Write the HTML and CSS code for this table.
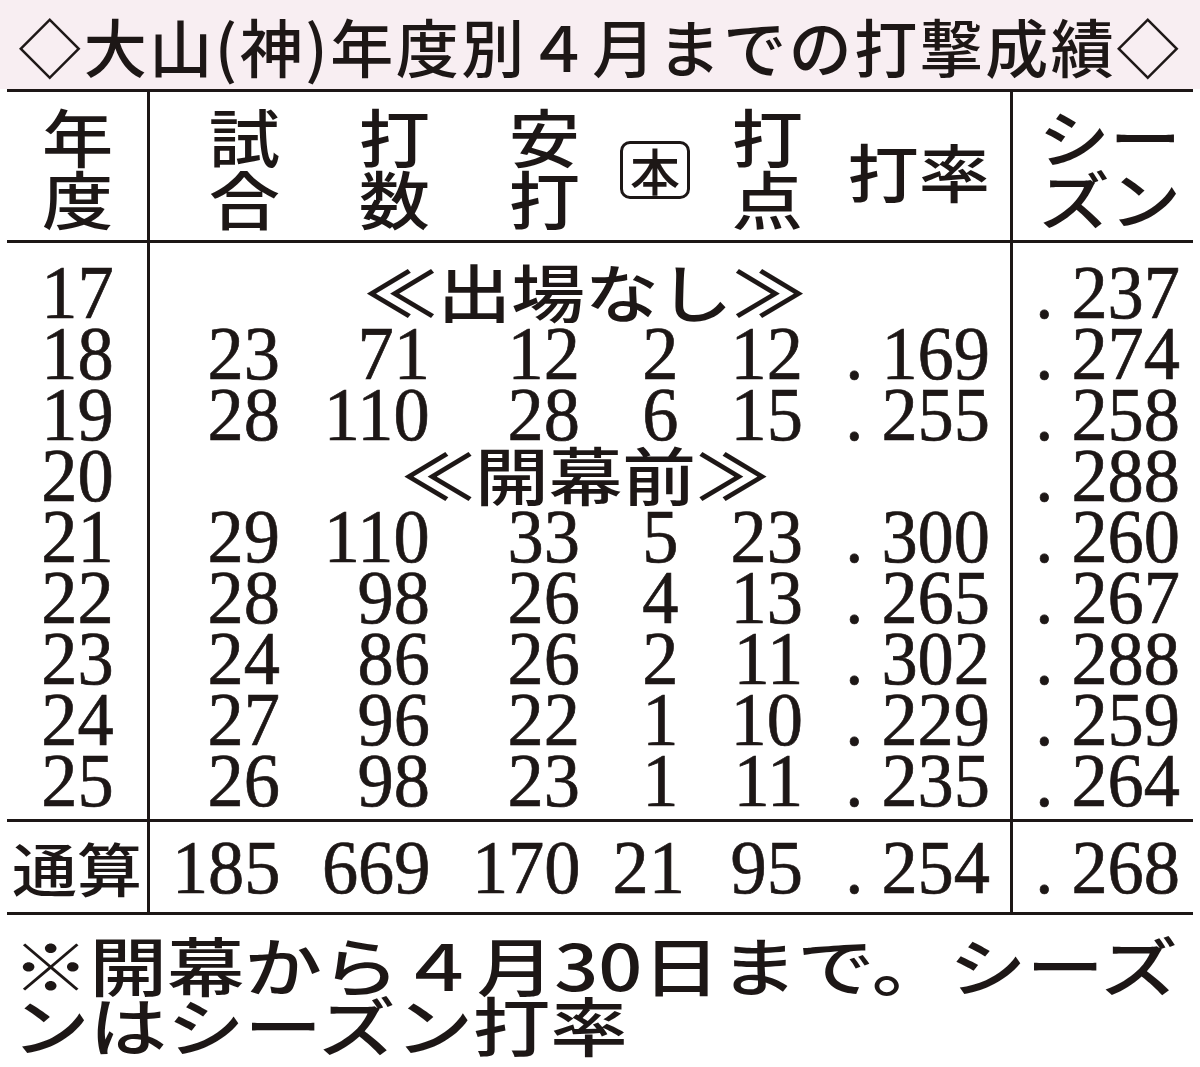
FILE: index.html
```html
<!DOCTYPE html>
<html lang="ja">
<head>
<meta charset="utf-8">
<title>大山（神）年度別４月までの打撃成績</title>
<link rel="stylesheet" href="styles.css">
</head>
<body>
<div class="title">◇大山(神)年度別４月までの打撃成績◇</div>
<div class="tbl">
  <div class="row head">
    <div class="c yr"><span class="hd">年<br>度</span></div>
    <div class="c"><span class="hd">試<br>合</span></div>
    <div class="c"><span class="hd">打<br>数</span></div>
    <div class="c"><span class="hd">安<br>打</span></div>
    <div class="c"><span class="hon">本</span></div>
    <div class="c"><span class="hd">打<br>点</span></div>
    <div class="c avg"><span class="hd">打率</span></div>
    <div class="c ssn"><span class="hd">シー<br>ズン</span></div>
  </div>
  <div class="body">
    <div class="row first">
      <div class="c yr"><span class="n">17</span></div>
      <div class="c span"><span class="lbl">≪出場なし≫</span></div>
      <div class="c ssn"><span class="n">. 237</span></div>
    </div>
    <div class="row">
      <div class="c yr"><span class="n">18</span></div>
      <div class="c"><span class="n">23</span></div>
      <div class="c"><span class="n">71</span></div>
      <div class="c"><span class="n">12</span></div>
      <div class="c"><span class="n">2</span></div>
      <div class="c"><span class="n">12</span></div>
      <div class="c avg"><span class="n">. 169</span></div>
      <div class="c ssn"><span class="n">. 274</span></div>
    </div>
    <div class="row">
      <div class="c yr"><span class="n">19</span></div>
      <div class="c"><span class="n">28</span></div>
      <div class="c"><span class="n">110</span></div>
      <div class="c"><span class="n">28</span></div>
      <div class="c"><span class="n">6</span></div>
      <div class="c"><span class="n">15</span></div>
      <div class="c avg"><span class="n">. 255</span></div>
      <div class="c ssn"><span class="n">. 258</span></div>
    </div>
    <div class="row">
      <div class="c yr"><span class="n">20</span></div>
      <div class="c span"><span class="lbl">≪開幕前≫</span></div>
      <div class="c ssn"><span class="n">. 288</span></div>
    </div>
    <div class="row">
      <div class="c yr"><span class="n">21</span></div>
      <div class="c"><span class="n">29</span></div>
      <div class="c"><span class="n">110</span></div>
      <div class="c"><span class="n">33</span></div>
      <div class="c"><span class="n">5</span></div>
      <div class="c"><span class="n">23</span></div>
      <div class="c avg"><span class="n">. 300</span></div>
      <div class="c ssn"><span class="n">. 260</span></div>
    </div>
    <div class="row">
      <div class="c yr"><span class="n">22</span></div>
      <div class="c"><span class="n">28</span></div>
      <div class="c"><span class="n">98</span></div>
      <div class="c"><span class="n">26</span></div>
      <div class="c"><span class="n">4</span></div>
      <div class="c"><span class="n">13</span></div>
      <div class="c avg"><span class="n">. 265</span></div>
      <div class="c ssn"><span class="n">. 267</span></div>
    </div>
    <div class="row">
      <div class="c yr"><span class="n">23</span></div>
      <div class="c"><span class="n">24</span></div>
      <div class="c"><span class="n">86</span></div>
      <div class="c"><span class="n">26</span></div>
      <div class="c"><span class="n">2</span></div>
      <div class="c"><span class="n">11</span></div>
      <div class="c avg"><span class="n">. 302</span></div>
      <div class="c ssn"><span class="n">. 288</span></div>
    </div>
    <div class="row">
      <div class="c yr"><span class="n">24</span></div>
      <div class="c"><span class="n">27</span></div>
      <div class="c"><span class="n">96</span></div>
      <div class="c"><span class="n">22</span></div>
      <div class="c"><span class="n">1</span></div>
      <div class="c"><span class="n">10</span></div>
      <div class="c avg"><span class="n">. 229</span></div>
      <div class="c ssn"><span class="n">. 259</span></div>
    </div>
    <div class="row last">
      <div class="c yr"><span class="n">25</span></div>
      <div class="c"><span class="n">26</span></div>
      <div class="c"><span class="n">98</span></div>
      <div class="c"><span class="n">23</span></div>
      <div class="c"><span class="n">1</span></div>
      <div class="c"><span class="n">11</span></div>
      <div class="c avg"><span class="n">. 235</span></div>
      <div class="c ssn"><span class="n">. 264</span></div>
    </div>
  </div>
  <div class="row total">
    <div class="c yr"><span class="tl">通算</span></div>
    <div class="c"><span class="n">185</span></div>
    <div class="c"><span class="n">669</span></div>
    <div class="c"><span class="n">170</span></div>
    <div class="c hrt"><span class="n">21</span></div>
    <div class="c"><span class="n">95</span></div>
    <div class="c avg"><span class="n">. 254</span></div>
    <div class="c ssn"><span class="n">. 268</span></div>
  </div>
</div>
<p class="note">※開幕から４月30日まで。シーズ<br>ンはシーズン打率</p>
</body>
</html>
```

FILE: styles.css
```css
* { box-sizing: border-box; }

html, body {
  margin: 0;
  padding: 0;
  background: #ffffff;
  color: #1d1716;
  font-family: "Noto Sans CJK JP", "Noto Sans", sans-serif;
}

body {
  width: 1200px;
  height: 1067px;
  overflow: hidden;
}

.title {
  height: 89px;
  background: #f8eef2;
  font-size: 63px;
  font-weight: 500;
  letter-spacing: 2.5px;
  line-height: 89px;
  text-align: center;
  white-space: nowrap;
}

.tbl {
  margin: 0 7px;
  border-top: 3px solid #1d1716;
}

.row {
  display: grid;
  grid-template-columns: 143px 130px 150px 150px 98px 125px 210px 180px;
}

.c {
  display: flex;
  align-items: center;
  justify-content: flex-end;
  white-space: nowrap;
}

.yr {
  justify-content: center;
  border-right: 3px solid #1d1716;
}

.avg {
  padding-right: 20px;
  border-right: 3px solid #1d1716;
}

.ssn {
  padding-right: 13px;
}

.span {
  grid-column: 2 / 8;
  justify-content: center;
  padding-left: 10px;
  padding-bottom: 6px;
  border-right: 3px solid #1d1716;
}

/* header */
.head {
  border-bottom: 3px solid #1d1716;
}

.head .c {
  height: 148px;
}

.hd {
  display: inline-block;
  font-size: 63px;
  font-weight: 500;
  line-height: 62px;
  transform: scaleX(1.13);
  transform-origin: right center;
}

.head .yr .hd {
  transform-origin: center center;
}

.head .ssn {
  padding-right: 12px;
}

.hon {
  display: inline-block;
  width: 70px;
  height: 58px;
  margin-right: -12px;
  margin-top: 8px;
  border: 3px solid #1d1716;
  border-radius: 10px;
  font-size: 50px;
  font-weight: 500;
  line-height: 50px;
  text-align: center;
}

.head .avg .hd {
  margin-top: 8px;
}

/* body */
.body {
  border-bottom: 3px solid #1d1716;
}

.body .c {
  height: 61px;
}

.body .first .c {
  height: 80px;
  padding-top: 19px;
}

.body .first .span {
  padding-bottom: 6px;
}

.body .last .c {
  height: 69px;
  padding-bottom: 8px;
}

.n {
  display: inline-block;
  font-family: "Liberation Serif", "Times New Roman", serif;
  font-size: 77px;
  line-height: 61px;
  -webkit-text-stroke: 0.7px currentColor;
  transform: scaleX(0.94);
  transform-origin: right center;
}

.yr .n {
  transform-origin: center center;
}

.lbl {
  display: inline-block;
  font-size: 63px;
  font-weight: 500;
  line-height: 61px;
  transform: scaleX(1.17);
  transform-origin: center center;
}

/* total */
.total {
  border-bottom: 3px solid #1d1716;
}

.total .c {
  height: 90px;
}

.hrt {
  margin-right: -7px;
}

.tl {
  display: inline-block;
  font-size: 58px;
  font-weight: 500;
  line-height: 61px;
  transform: scaleX(1.12);
}

.note {
  width: 990px;
  margin: 0;
  padding: 18px 0 0 10px;
  font-size: 64px;
  font-weight: 500;
  line-height: 60px;
  white-space: nowrap;
  transform: scaleX(1.21);
  transform-origin: left top;
}
```
